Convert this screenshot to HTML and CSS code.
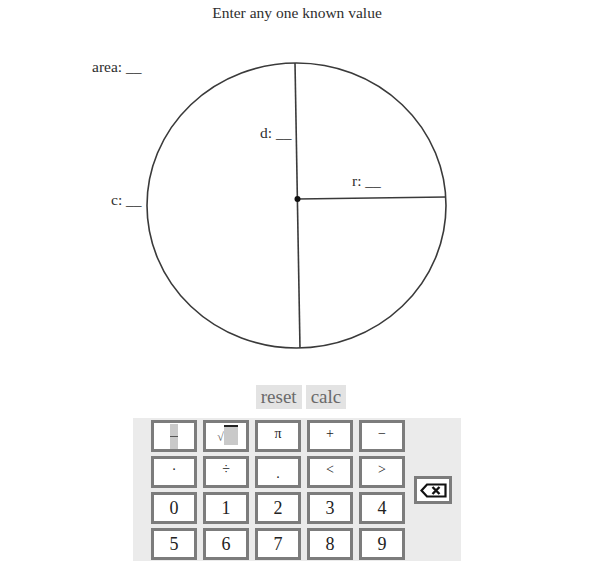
FILE: index.html
```html
<!DOCTYPE html>
<html>
<head>
<meta charset="utf-8">
<link rel="stylesheet" href="styles.css">
</head>
<body>
<h1 class="title">Enter any one known value</h1>
<div class="diagram">
  <svg class="figure" width="594" height="358" viewBox="0 0 594 358">
    <ellipse cx="296.5" cy="181.5" rx="149.5" ry="142.5" fill="none" stroke="#3a3a3a" stroke-width="1.6"/>
    <line x1="295" y1="39" x2="300" y2="324" stroke="#3a3a3a" stroke-width="1.6"/>
    <line x1="297.5" y1="175" x2="446" y2="173" stroke="#3a3a3a" stroke-width="1.6"/>
    <circle cx="297.5" cy="175" r="3" fill="#111"/>
  </svg>
  <span class="label label-area">area: __</span>
  <span class="label label-d">d: __</span>
  <span class="label label-r">r: __</span>
  <span class="label label-c">c: __</span>
</div>
<div class="actions">
  <button class="action">reset</button>
  <button class="action">calc</button>
</div>
<div class="keypad">
  <div class="keys">
    <button class="key"><span class="frac"><span class="frac-bar"></span></span></button>
    <button class="key"><span class="sqrt"><span class="sqrt-sign">√</span><span class="sqrt-box"></span></span></button>
    <button class="key sym">π</button>
    <button class="key sym">+</button>
    <button class="key sym">−</button>
    <button class="key sym">·</button>
    <button class="key sym">÷</button>
    <button class="key sym dot">.</button>
    <button class="key sym">&lt;</button>
    <button class="key sym">&gt;</button>
    <button class="key">0</button>
    <button class="key">1</button>
    <button class="key">2</button>
    <button class="key">3</button>
    <button class="key">4</button>
    <button class="key">5</button>
    <button class="key">6</button>
    <button class="key">7</button>
    <button class="key">8</button>
    <button class="key">9</button>
  </div>
  <button class="backspace" aria-label="backspace">
    <svg width="27" height="15" viewBox="0 0 27 15">
      <path d="M7 1.5 H25.5 V13.5 H7 L1.5 7.5 Z" fill="none" stroke="#111" stroke-width="2.2" stroke-linejoin="miter"/>
      <path d="M12.5 4 L19.5 11 M19.5 4 L12.5 11" stroke="#111" stroke-width="2.4"/>
    </svg>
  </button>
</div>
</body>
</html>
```
FILE: styles.css
```css
html, body {
  margin: 0;
  padding: 0;
  background: #fff;
}
body {
  width: 594px;
  height: 561px;
  overflow: hidden;
  font-family: "Liberation Serif", "DejaVu Serif", serif;
  color: #333;
}
.title {
  margin: 0;
  padding-top: 3px;
  height: 21px;
  line-height: 20px;
  font-size: 15.5px;
  font-weight: normal;
  text-align: center;
  color: #2e2e2e;
}
.diagram {
  position: relative;
  width: 594px;
  height: 358px;
}
.figure {
  display: block;
}
.label {
  position: absolute;
  font-size: 15.5px;
  line-height: 18px;
  color: #2e2e2e;
  white-space: nowrap;
}
.label-area { left: 92px; top: 34px; }
.label-d { left: 260px; top: 100px; }
.label-r { left: 352px; top: 148px; }
.label-c { left: 111px; top: 167px; }

.actions {
  display: flex;
  justify-content: center;
  gap: 4px;
  padding-left: 8px;
  margin-top: 3px;
  height: 24px;
}
.action {
  margin: 0;
  border: none;
  background: #e3e3e3;
  color: #6a6a6a;
  font-family: "Liberation Serif", "DejaVu Serif", serif;
  font-size: 19px;
  line-height: 24px;
  padding: 0 5px;
  height: 24px;
}
.keypad {
  margin: 9px auto 0;
  width: 328px;
  height: 150px;
  background: #ebebeb;
  box-sizing: border-box;
  padding: 2px 9px 0 18px;
  display: flex;
  align-items: flex-start;
  gap: 9px;
}
.keys {
  display: grid;
  grid-template-columns: repeat(5, 46px);
  grid-auto-rows: 32px;
  column-gap: 6px;
  row-gap: 4px;
}
.key {
  margin: 0;
  padding: 0;
  box-sizing: border-box;
  width: 46px;
  height: 32px;
  border: 3px solid #7c7c7c;
  background: #fff;
  color: #222;
  font-family: "Liberation Serif", "DejaVu Serif", serif;
  font-size: 18px;
  display: flex;
  align-items: center;
  justify-content: center;
}
.key.sym {
  font-size: 14px;
  align-items: flex-start;
  padding-top: 3px;
}
.key.dot {
  padding-top: 7px;
}
.frac {
  width: 8px;
  height: 25px;
  background: #c9c9c9;
  display: flex;
  align-items: center;
}
.frac-bar {
  width: 8px;
  height: 1px;
  background: #555;
}
.sqrt {
  display: flex;
  align-items: flex-start;
  height: 24px;
  padding-left: 3px;
}
.sqrt-sign {
  font-size: 12px;
  line-height: 12px;
  margin-top: 7px;
  color: #666;
}
.sqrt-box {
  width: 14px;
  height: 18px;
  background: #c9c9c9;
  border-top: 2px solid #222;
  margin-top: 1px;
}
.backspace {
  margin: 56px 0 0;
  padding: 0;
  box-sizing: border-box;
  width: 38px;
  height: 28px;
  border: 3px solid #7c7c7c;
  background: #fff;
  display: flex;
  align-items: center;
  justify-content: center;
}
.backspace svg {
  display: block;
}
```
